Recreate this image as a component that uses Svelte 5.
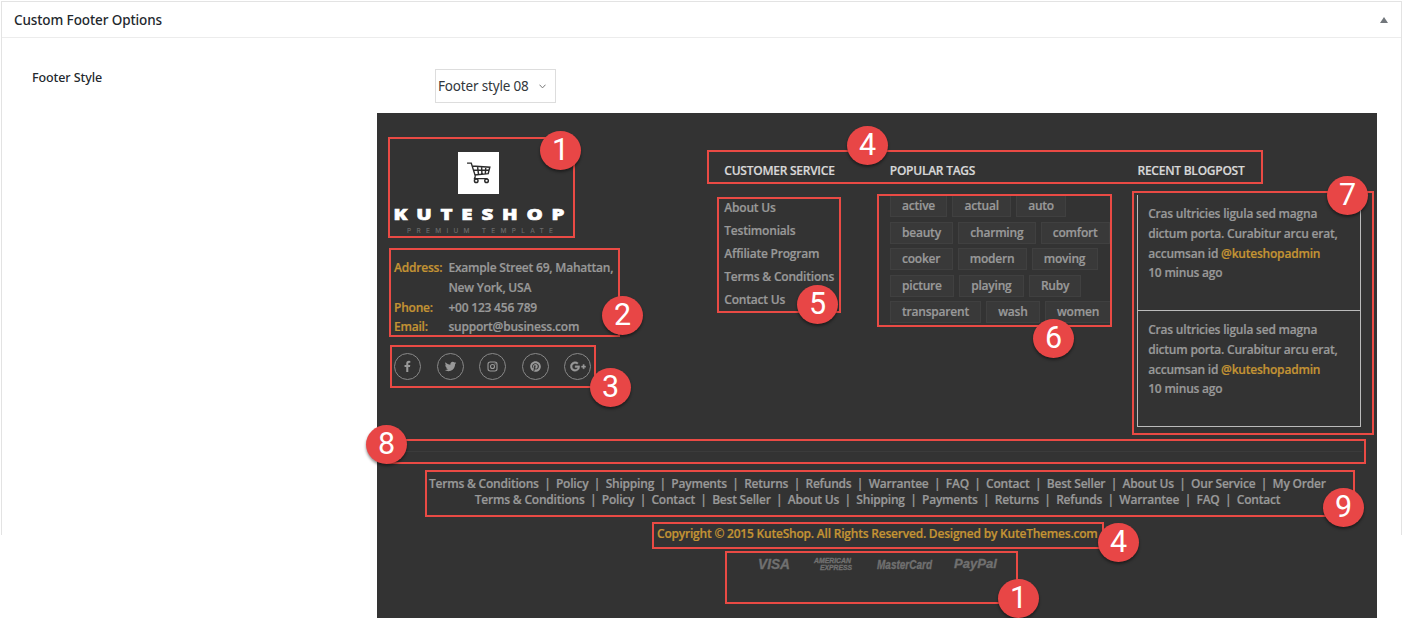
<script>
  const services = ['About Us', 'Testimonials', 'Affiliate Program', 'Terms & Conditions', 'Contact Us'];
  const tagRows = [
    ['active', 'actual', 'auto'],
    ['beauty', 'charming', 'comfort'],
    ['cooker', 'modern', 'moving'],
    ['picture', 'playing', 'Ruby'],
    ['transparent', 'wash', 'women']
  ];
  const links = [
    ['Terms & Conditions', 'Policy', 'Shipping', 'Payments', 'Returns', 'Refunds', 'Warrantee', 'FAQ', 'Contact', 'Best Seller', 'About Us', 'Our Service', 'My Order'],
    ['Terms & Conditions', 'Policy', 'Contact', 'Best Seller', 'About Us', 'Shipping', 'Payments', 'Returns', 'Refunds', 'Warrantee', 'FAQ', 'Contact']
  ];
  // Callout frames and numbered badges lying over the preview: [left, top, right, bottom]
  const frames = [
    [388, 137, 575, 238], [389, 248, 620, 337], [390, 345, 596, 388], [707, 150, 1263, 184],
    [717, 197, 841, 313], [877, 194, 1112, 327], [1132, 191, 1374, 435], [387, 439, 1366, 464],
    [425, 470, 1355, 517], [652, 522, 1104, 549], [725, 551, 1018, 604]
  ];
  const badges = [
    [1, 540, 131], [2, 602, 296], [3, 590, 368], [4, 847, 126], [5, 797, 285], [6, 1033, 319],
    [7, 1327, 176], [8, 366, 425], [9, 1323, 488], [4, 1098, 523], [1, 998, 579]
  ];
</script>

<div class="page">
  <section class="panel">
    <header class="panel-head">
      <h2>Custom Footer Options</h2>
      <svg width="8" height="6" viewBox="0 0 8 6"><path d="M4 0 8 6H0Z" fill="#72777c" /></svg>
    </header>
    <div class="option">
      <span class="label">Footer Style</span>
      <div class="select">
        <span>Footer style 08</span>
        <svg width="7" height="5" viewBox="0 0 7 5"><path d="M.5 .7 3.5 3.9 6.5 .7" fill="none" stroke="#777" /></svg>
      </div>
    </div>
  </section>

  <footer class="preview">
    <div class="columns">
      <div class="brand">
        <div class="logo">
          <div class="mark">
            <svg width="26" height="22" viewBox="0 0 27 23" fill="none" stroke="#2b2b2b" stroke-width="1.5">
              <path d="M1 1.200h4.400l4.300 13.600M6.200 4.200l18.600 1.300-1.700 6.700-14.200 1.400M7.600 8.600l16.200-.2M12 4.800l1 8.400M16.200 5l.4 7.800M20.600 5.200l-.5 7.200M9.700 14.800l-.9 2.600h13.600" />
              <circle cx="10.600" cy="19.600" r="1.900" /><circle cx="21.400" cy="19.600" r="1.900" />
            </svg>
          </div>
          <svg class="word" width="180" height="30" viewBox="0 0 180 30">
            <text class="name" x="-.5" y="14.200" textLength="138" transform="scale(1.240 1)">KUTESHOP</text>
            <text class="tagline" x="13" y="26.500" textLength="146">PREMIUM TEMPLATE</text>
          </svg>
        </div>
        <dl class="contact">
          <dt>Address:</dt><dd>Example Street 69, Mahattan,<br />New York, USA</dd>
          <dt>Phone:</dt><dd>+00 123 456 789</dd>
          <dt>Email:</dt><dd>support@business.com</dd>
        </dl>
        <div class="social">
          <span><svg width="12" height="12" viewBox="0 0 1792 1792"><path d="M1243 140v264h-157q-86 0-116 36t-30 108v189h293l-39 296h-254v759h-306v-759h-255v-296h255v-218q0-186 104-288.500t277-102.500q147 0 228 12z" /></svg></span>
          <span><svg width="13" height="13" viewBox="0 0 1792 1792"><path d="M1684 408q-67 98-162 167 1 14 1 42 0 130-38 259.500t-115.500 248.500-184.500 210.500-258 146-323 54.500q-271 0-496-145 35 4 78 4 225 0 401-138-105-2-188-64.500t-114-159.500q33 5 61 5 43 0 85-11-112-23-185.500-111.500t-73.500-205.500v-4q68 38 146 41-66-44-105-115t-39-154q0-88 44-163 121 149 294.500 238.500t371.500 99.500q-8-38-8-74 0-134 94.500-228.500t228.500-94.500q140 0 236 102 109-21 205-78-37 115-142 178 93-10 186-50z" /></svg></span>
          <span><svg width="11" height="11" viewBox="0 0 12 12"><g fill="none" stroke="#999" stroke-width="1.200"><rect x="1.100" y="1.100" width="9.800" height="9.800" rx="2.400" /><circle cx="6" cy="6" r="2.200" /></g><circle cx="8.800" cy="3.200" r=".7" /></svg></span>
          <span><svg width="11" height="11" viewBox="0 0 496 512"><path d="M496 256c0 137-111 248-248 248-25.600 0-50.200-3.900-73.400-11.100 10.100-16.500 25.200-43.500 30.800-65 3-11.600 15.400-59 15.400-59 8.100 15.400 31.700 28.500 56.800 28.500 74.800 0 128.700-68.800 128.700-154.300 0-81.900-66.900-143.200-152.900-143.200-107 0-163.900 71.800-163.900 150.100 0 36.400 19.400 81.700 50.300 96.100 4.700 2.200 7.200 1.200 8.300-3.300.8-3.400 5-20.300 6.900-28.100.6-2.500.3-4.700-1.700-7.100-10.100-12.500-18.300-35.300-18.300-56.600 0-54.700 41.400-107.600 112-107.600 60.900 0 103.600 41.500 103.600 100.900 0 67.100-33.900 113.600-78 113.600-24.300 0-42.600-20.100-36.700-44.800 7-29.500 20.500-61.300 20.500-82.600 0-19-10.200-34.900-31.400-34.900-24.900 0-44.900 25.700-44.900 60.200 0 22 7.400 36.800 7.400 36.800s-24.500 103.800-29 123.200c-5 21.400-3 51.600-.9 71.200C65.400 450.900 0 361.100 0 256 0 119 111 8 248 8s248 111 248 248z" /></svg></span>
          <span><svg width="16" height="13" viewBox="0 0 640 512"><path d="M386.061 228.496c1.834 9.692 3.143 19.384 3.143 31.956C389.204 370.205 315.599 448 204.800 448c-106.084 0-192-85.915-192-192s85.916-192 192-192c51.864 0 95.083 18.859 128.611 50.292l-52.126 50.030c-14.145-13.621-39.028-29.599-76.485-29.599-65.484 0-118.920 54.221-118.920 121.277 0 67.056 53.436 121.277 118.920 121.277 75.961 0 104.513-54.745 108.965-82.773H204.800v-66.009h181.261zm185.406 6.437V179.200h-56.001v55.733h-55.733v56.001h55.733v55.733h56.001v-55.733H627.200v-56.001h-55.733z" stroke="#999" stroke-width="14" /></svg></span>
        </div>
      </div>

      <div>
        <h3>CUSTOMER SERVICE</h3>
        <ul class="services">
          {#each services as item}<li>{item}</li>{/each}
        </ul>
      </div>

      <div>
        <h3>POPULAR TAGS</h3>
        <div class="tags">
          {#each tagRows as row}
            <div class="tag-row">{#each row as tag}<span>{tag}</span>{/each}</div>
          {/each}
        </div>
      </div>

      <div>
        <h3>RECENT BLOGPOST</h3>
        <div class="posts">
          {#each [0, 1] as _}
            <p>Cras ultricies ligula sed magna<br />dictum porta. Curabitur arcu erat,<br />accumsan id <b>@kuteshopadmin</b><br />10 minus ago</p>
          {/each}
        </div>
      </div>
    </div>

    <hr />

    <nav>
      {#each links as row, i}
        <div class="links" class:second={i === 1}>
          {#each row as link, j}{#if j}<i>|</i>{/if}<span>{link}</span>{/each}
        </div>
      {/each}
    </nav>
    <p class="copyright">Copyright © 2015 KuteShop. All Rights Reserved. Designed by KuteThemes.com</p>
    <svg class="payments" width="250" height="20" viewBox="0 0 250 20">
      <text x="1" y="13" font-size="14" textLength="32" lengthAdjust="spacingAndGlyphs">VISA</text>
      <text x="57" y="7" font-size="6.500" textLength="37" lengthAdjust="spacingAndGlyphs">AMERICAN</text>
      <text x="63" y="14" font-size="6.500" textLength="32" lengthAdjust="spacingAndGlyphs">EXPRESS</text>
      <text x="120" y="13" font-size="12" textLength="55" lengthAdjust="spacingAndGlyphs">MasterCard</text>
      <text x="197" y="12" font-size="13" textLength="43" lengthAdjust="spacingAndGlyphs">PayPal</text>
    </svg>
  </footer>

  {#each frames as [l, t, r, b]}
    <div class="frame" style="left:{l}px;top:{t}px;width:{r - l}px;height:{b - t}px"></div>
  {/each}
  {#each badges as [n, x, y]}
    <div class="badge" style="left:{x}px;top:{y}px">{n}</div>
  {/each}
</div>

<style>
  :global(body) { background: #fff; overflow: hidden; }
  * { box-sizing: border-box; margin: 0; padding: 0; }
  .page {
    position: relative; width: 1402px; height: 618px; overflow: hidden;
    font-family: 'Open Sans', sans-serif; font-size: 12px; font-weight: 600; color: #999;
    display: flex; flex-direction: column;
  }
  .panel {
    height: 534px; flex: none; margin: 1px 0 0 1px; border: 1px solid #e3e3e3; border-bottom: 0;
    font-family: 'Noto Sans', sans-serif; color: #23282d;
  }
  .panel-head {
    height: 36px; border-bottom: 1px solid #ececec; padding: 0 13px 0 12px;
    display: flex; align-items: center; justify-content: space-between;
  }
  h2 { font-size: 13.500px; font-weight: 500; line-height: 36px; letter-spacing: -.1px; }
  .option { display: flex; padding: 31px 0 0 30px; align-items: flex-start; font-weight: 400; }
  .label { width: 403px; font-size: 12.500px; line-height: 17px; font-weight: 500; letter-spacing: -.1px; }
  .select {
    width: 121px; height: 34px; border: 1px solid #ddd; padding: 0 9px 0 2px; color: #32373c;
    display: flex; align-items: center; justify-content: space-between; font-size: 13.500px; letter-spacing: -.17px; white-space: nowrap;
  }
  .preview {
    width: 1000px; height: 505px; flex: none; margin: -422px 0 0 377px; background: #333; z-index: 1; letter-spacing: -.21px;
    -webkit-text-stroke-width: .2px;
  }
  .columns { display: grid; grid-template-columns: 330.300px 165.500px 247.700px 224px; padding-left: 17px; height: 338px; }
  .columns > div { padding-top: 48px; }
  .columns > .brand { padding-top: 39px; }
  h3 { font-size: 12px; line-height: 20px; color: #d8d8d8; font-weight: 600; letter-spacing: -.25px; white-space: nowrap; }
  .logo { height: 106px; }
  .mark { width: 41px; height: 42px; margin-left: 64px; background: #fff; display: grid; place-items: center; }
  .word { display: block; margin-top: 12px; overflow: visible; letter-spacing: 0; -webkit-text-stroke-width: 0; }
  .name { font: 800 16.500px 'Open Sans', sans-serif; fill: #fff; stroke: #fff; stroke-width: .6px; }
  .tagline { font: 500 6.500px Inter, sans-serif; fill: #6a6a6a; }
  .contact { display: grid; grid-template-columns: 54px 200px; line-height: 19.800px; white-space: nowrap; }
  dt { color: #c49433; }
  dd { padding-left: .4px; }
  .social { display: flex; gap: 15.500px; margin-top: 15.400px; }
  .social span { width: 27px; height: 27px; border: 1px solid #888; border-radius: 50%; display: grid; place-items: center; }
  .social svg { fill: #999; }
  ul { list-style: none; margin-top: 14.600px; line-height: 23px; white-space: nowrap; }
  .tags { margin-top: 14.400px; display: flex; flex-direction: column; gap: 4.400px; width: 221px; overflow: hidden; }
  .tag-row { display: flex; gap: 5px; }
  .tag-row span { height: 22px; line-height: 20px; flex: none; padding: 0 11.200px; background: #393939; border: 1px solid #404040; }
  .posts { margin-top: 14px; width: 223.500px; border: solid #bbb; border-width: 0 1px; line-height: 19.800px; white-space: nowrap; }
  .posts p { height: 116px; padding: 9px 0 0 9.700px; border-bottom: 1px solid #bbb; }
  b { font-weight: 600; color: #c49433; }
  hr { border: 0; height: 1px; background: #3b3b3b; margin: 0 15px 0 13px; }
  nav { margin-top: 24px; }
  .links { display: flex; height: 16.300px; line-height: 16.300px; margin-left: 52px; white-space: nowrap; }
  .links.second { margin-left: 97.800px; }
  .links i { font-style: normal; margin: 0 5.400px; }
  .copyright { color: #c49433; margin: 16.400px 0 0 280px; line-height: 18px; white-space: nowrap; }
  .payments {
    display: block; margin: 13px 0 0 380px; letter-spacing: 0; overflow: visible;
    font-family: 'Liberation Sans', sans-serif; font-style: italic; font-weight: 700; fill: #707070; stroke: #707070; stroke-width: .3px;
  }
  .frame { position: absolute; border: 2px solid #ea4a44; z-index: 2; }
  .badge {
    position: absolute; z-index: 3; width: 41px; height: 39px; border-radius: 50%; background: #e84646; color: #fff;
    font: 400 30.500px/38px Roboto, sans-serif; text-align: center; box-shadow: 0 2px 3px rgba(0, 0, 0, .45);
  }
</style>
